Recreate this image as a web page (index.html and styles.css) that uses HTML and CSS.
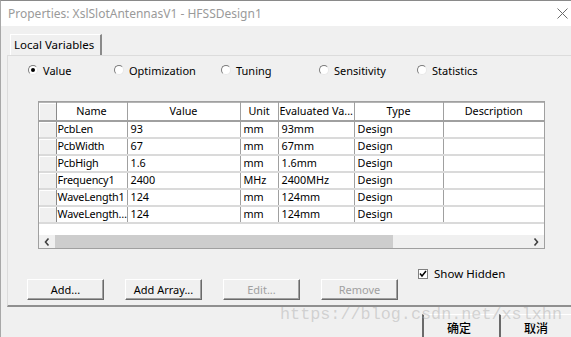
FILE: index.html
```html
<!DOCTYPE html>
<html lang="en">

<head>
    <meta charset="UTF-8">
    <meta name="viewport" content="width=device-width, initial-scale=1.0">
    <title>Properties: XslSlotAntennasV1 - HFSSDesign1</title>
    <link rel="stylesheet" href="styles.css">
</head>

<body>

    <div class="window">
        <div class="titlebar">
            <span class="title">Properties: XslSlotAntennasV1 - HFSSDesign1</span>
            <svg class="close" width="11" height="11" viewBox="0 0 11 11">
                <path d="M0.5 0.5 L10.5 10.5 M10.5 0.5 L0.5 10.5" stroke="#6b6b6b" stroke-width="1" fill="none" />
            </svg>
        </div>

        <div class="content">
            <div class="tabs">
                <div class="tab">Local Variables</div>
            </div>

            <div class="panel">
                <div class="modes">
                    <label class="mode"><span class="radio checked"></span>Value</label>
                    <label class="mode"><span class="radio"></span>Optimization</label>
                    <label class="mode"><span class="radio"></span>Tuning</label>
                    <label class="mode"><span class="radio"></span>Sensitivity</label>
                    <label class="mode"><span class="radio"></span>Statistics</label>
                </div>

                <div class="grid">
                    <table class="vars">
                        <colgroup>
                            <col class="c-hdr">
                            <col class="c-name">
                            <col class="c-value">
                            <col class="c-unit">
                            <col class="c-eval">
                            <col class="c-type">
                            <col class="c-desc">
                        </colgroup>
                        <thead>
                            <tr>
                                <th class="rowhead"></th>
                                <th>Name</th>
                                <th>Value</th>
                                <th>Unit</th>
                                <th>Evaluated Va...</th>
                                <th>Type</th>
                                <th>Description</th>
                            </tr>
                        </thead>
                        <tbody>
                            <tr>
                                <td class="rowhead"></td>
                                <td class="name">PcbLen</td>
                                <td>93</td>
                                <td>mm</td>
                                <td>93mm</td>
                                <td>Design</td>
                                <td></td>
                            </tr>
                            <tr>
                                <td class="rowhead"></td>
                                <td class="name">PcbWidth</td>
                                <td>67</td>
                                <td>mm</td>
                                <td>67mm</td>
                                <td>Design</td>
                                <td></td>
                            </tr>
                            <tr>
                                <td class="rowhead"></td>
                                <td class="name">PcbHigh</td>
                                <td>1.6</td>
                                <td>mm</td>
                                <td>1.6mm</td>
                                <td>Design</td>
                                <td></td>
                            </tr>
                            <tr>
                                <td class="rowhead"></td>
                                <td class="name">Frequency1</td>
                                <td>2400</td>
                                <td>MHz</td>
                                <td>2400MHz</td>
                                <td>Design</td>
                                <td></td>
                            </tr>
                            <tr>
                                <td class="rowhead"></td>
                                <td class="name">WaveLength1</td>
                                <td>124</td>
                                <td>mm</td>
                                <td>124mm</td>
                                <td>Design</td>
                                <td></td>
                            </tr>
                            <tr>
                                <td class="rowhead"></td>
                                <td class="name">WaveLength…</td>
                                <td>124</td>
                                <td>mm</td>
                                <td>124mm</td>
                                <td>Design</td>
                                <td></td>
                            </tr>
                        </tbody>
                    </table>
                    <div class="filler"></div>
                    <div class="hscroll">
                        <div class="arrow">
                            <svg width="6" height="8" viewBox="0 0 6 8">
                                <path d="M4.5 0.5 L1.5 4 L4.5 7.5" stroke="#404040" stroke-width="1.6" fill="none" />
                            </svg>
                        </div>
                        <div class="thumb"></div>
                        <div class="track"></div>
                        <div class="arrow">
                            <svg width="6" height="8" viewBox="0 0 6 8">
                                <path d="M1.5 0.5 L4.5 4 L1.5 7.5" stroke="#404040" stroke-width="1.6" fill="none" />
                            </svg>
                        </div>
                    </div>
                </div>

                <div class="options">
                    <label class="check">
                        <svg class="box" width="10" height="10" viewBox="0 0 10 10">
                            <rect x="0.5" y="0.5" width="9" height="9" fill="#fff" stroke="#808080" />
                            <path d="M2 4.5 L4 7 L8 2" stroke="#000" stroke-width="1.5" fill="none" />
                        </svg>
                        Show Hidden
                    </label>
                </div>

                <div class="actions">
                    <button class="btn">Add...</button>
                    <button class="btn">Add Array...</button>
                    <button class="btn" disabled>Edit...</button>
                    <button class="btn" disabled>Remove</button>
                </div>
            </div>

            <div class="footer">
                <button class="dlg-btn ok">确定</button>
                <button class="dlg-btn">取消</button>
            </div>
        </div>

        <div class="watermark">https://blog.csdn.net/xslxhn</div>
    </div>

</body>

</html>
```

FILE: styles.css
```css
* {
    margin: 0;
    padding: 0;
    box-sizing: border-box;
}

body {
    font-family: "Noto Sans", "Noto Sans CJK SC", sans-serif;
    font-size: 11px;
    color: #000;
    background: #f0f0f0;
    overflow: hidden;
}

.window {
    position: relative;
    width: 571px;
    height: 337px;
    border-top: 1px solid #8a8a8a;
    border-left: 1px solid #a8a8a8;
    background: #f0f0f0;
    overflow: hidden;
}

.titlebar {
    height: 25px;
    background: #fff;
    display: flex;
    align-items: center;
    justify-content: space-between;
    padding: 0 3px 0 7px;
}

.title {
    font-size: 12px;
    color: #9a9a9a;
}

.content {
    padding-top: 8px;
}

/* tab strip */
.tabs {
    display: flex;
    padding-left: 9px;
    height: 21px;
}

.tab {
    height: 21px;
    padding: 1px 6px 0 3px;
    background: #f0f0f0;
    border-top: 1px solid #fff;
    border-left: 1px solid #fff;
    border-right: 2px solid #8a8a8a;
    line-height: 18px;
    font-size: 11.5px;
    position: relative;
    z-index: 1;
    margin-bottom: -1px;
}

.panel {
    margin-left: 6px;
    width: 580px;
    height: 252px;
    border-top: 1px solid #dcdcdc;
    border-left: 1px solid #dcdcdc;
    border-bottom: 2px solid #8f8f8f;
    padding: 6px 0 0 0;
}

/* mode radios */
.modes {
    display: grid;
    grid-template-columns: 86px 107px 98px 98px auto;
    padding-left: 20px;
    height: 16px;
    align-items: center;
}

.mode {
    display: flex;
    align-items: center;
    gap: 5px;
    white-space: nowrap;
}

.radio {
    width: 10px;
    height: 10px;
    border-radius: 50%;
    border: 1px solid;
    border-color: #7a7a7a #e8e8e8 #e8e8e8 #7a7a7a;
    background: #fff;
    position: relative;
}

.radio.checked::after {
    content: "";
    position: absolute;
    left: 2px;
    top: 2px;
    width: 4px;
    height: 4px;
    border-radius: 50%;
    background: #000;
}

/* variables grid */
.grid {
    margin: 23px 0 0 30px;
    width: 507px;
    height: 148px;
    border: 1px solid #a0a0a0;
    background: #fff;
    display: flex;
    flex-direction: column;
}

.vars {
    border-collapse: collapse;
    table-layout: fixed;
    width: 505px;
    font-size: 10.8px;
}

.c-hdr { width: 17px; }
.c-name { width: 71px; }
.c-value { width: 113px; }
.c-unit { width: 38px; }
.c-eval { width: 76px; }
.c-type { width: 89px; }
.c-desc { width: 101px; }

.vars th {
    height: 18px;
    padding: 0 1px;
    font-weight: normal;
    text-align: center;
    background: #fff;
    border-top: 1px solid #b4b4b4;
    border-right: 1px solid #a0a0a0;
    border-bottom: 2px solid #a0a0a0;
    white-space: nowrap;
    overflow: hidden;
    line-height: 14px;
}

.vars td {
    height: 17px;
    padding: 0 0 0 3px;
    border-right: 1px solid #a0a0a0;
    border-bottom: 2px solid #dadada;
    white-space: nowrap;
    overflow: hidden;
    line-height: 14px;
}

.vars td.name {
    padding-left: 1px;
    letter-spacing: -0.2px;
}

.vars td:last-child,
.vars th:last-child {
    border-right: none;
}

.vars .rowhead {
    background: #f0f0f0;
    border-right: 1px solid #8a8a8a;
    box-shadow: inset 1px 1px 0 #fff;
}

.filler {
    flex: 1;
}

.hscroll {
    height: 13px;
    display: flex;
    background: #f0f0f0;
}

.arrow {
    width: 16px;
    display: flex;
    align-items: center;
    justify-content: center;
}

.thumb {
    width: 338px;
    background: #cdcdcd;
}

.track {
    flex: 1;
}

/* show hidden */
.options {
    padding: 17px 0 0 410px;
    height: 30px;
}

.check {
    display: flex;
    align-items: center;
    gap: 6px;
    white-space: nowrap;
    font-size: 11.5px;
}

/* action buttons */
.actions {
    display: flex;
    gap: 21px;
    padding-left: 19px;
}

.btn {
    width: 77px;
    height: 21px;
    font: inherit;
    color: #000;
    background: #f0f0f0;
    border: 1px solid;
    border-color: #fff #6a6a6a #6a6a6a #fff;
    box-shadow: inset -1px -1px 0 #a0a0a0;
}

.btn:disabled {
    color: #a0a0a0;
}

/* dialog footer */
.footer {
    display: flex;
    gap: 5px;
    padding: 7px 0 0 421px;
}

.dlg-btn {
    width: 75px;
    height: 24px;
    font-family: "Noto Sans CJK SC", sans-serif;
    font-size: 12px;
    font-weight: 500;
    color: #000;
    background: #f0f0f0;
    border: none;
    border-left: 2px solid #6a6a6a;
    border-top: 1px solid #fff;
    padding-top: 1px;
}

/* overlay text across the bottom */
.watermark {
    position: absolute;
    left: 279px;
    top: 304px;
    font-family: "Liberation Mono", monospace;
    font-size: 16.8px;
    color: rgba(170, 170, 170, 0.45);
    white-space: nowrap;
    pointer-events: none;
}
```
